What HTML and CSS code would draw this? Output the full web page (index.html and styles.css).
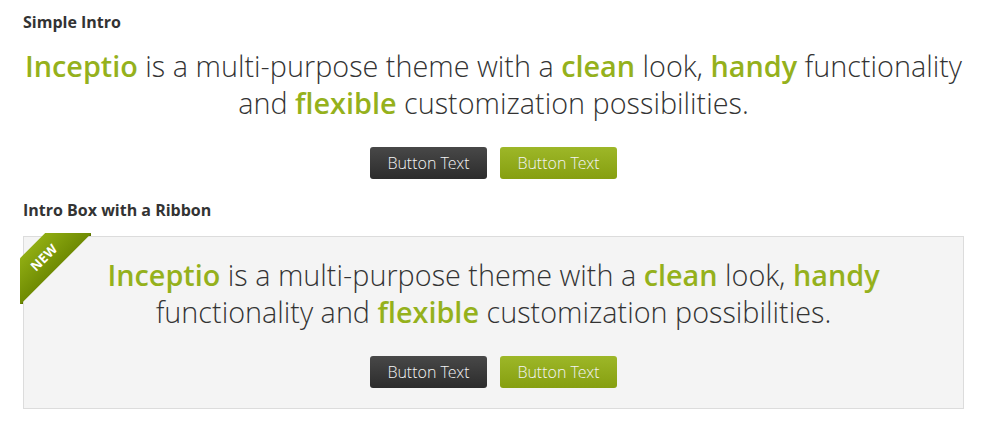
FILE: index.html
```html
<!DOCTYPE html>
<html>
<head>
<meta charset="utf-8">
<link rel="stylesheet" href="styles.css">
</head>
<body>
<div class="page">
  <h4 class="title">Simple Intro</h4>
  <div class="intro">
    <p class="intro-text"><strong>Inceptio</strong> is a multi-purpose theme with a <strong>clean</strong> look, <strong>handy</strong> functionality and <strong>flexible</strong> customization possibilities.</p>
    <div class="buttons">
      <a class="btn btn-dark">Button Text</a>
      <a class="btn btn-green">Button Text</a>
    </div>
  </div>

  <h4 class="title title-2">Intro Box with a Ribbon</h4>
  <div class="intro intro-box">
    <div class="ribbon-wrap"><div class="ribbon">NEW</div></div>
    <p class="intro-text"><strong>Inceptio</strong> is a multi-purpose theme with a <strong>clean</strong> look, <strong>handy</strong> functionality and <strong>flexible</strong> customization possibilities.</p>
    <div class="buttons">
      <a class="btn btn-dark">Button Text</a>
      <a class="btn btn-green">Button Text</a>
    </div>
  </div>
</div>
</body>
</html>
```

FILE: styles.css
```css
* { box-sizing: border-box; }
html, body { margin: 0; padding: 0; background: #fff; }
body {
  font-family: "Open Sans", "Liberation Sans", sans-serif;
  color: #333;
}
.page {
  padding: 12px 30px 0 23px;
}
.title {
  margin: 0;
  font-size: 16px;
  line-height: 20px;
  font-weight: 700;
  color: #333;
}
.title-2 { margin-top: 21px; }
.intro {
  text-align: center;
  margin-top: 15px;
}
.intro-text {
  margin: 0;
  font-family: "Open Sans Light", "Open Sans", sans-serif;
  font-size: 28.8px;
  line-height: 37px;
  font-weight: 300;
  color: #333;
}
.intro-text strong {
  font-family: "Open Sans", sans-serif;
  font-weight: 600;
  color: #95b11c;
}
.buttons {
  display: flex;
  justify-content: center;
  gap: 13px;
  margin-top: 26px;
}
.btn {
  display: block;
  width: 117px;
  height: 32px;
  line-height: 32px;
  font-family: "Open Sans Light", "Open Sans", sans-serif;
  font-size: 16px;
  font-weight: 300;
  color: #f4f4f4;
  border-radius: 3px;
  text-align: center;
}
.btn-dark {
  background: linear-gradient(#484848, #2c2c2c);
}
.btn-green {
  background: linear-gradient(#9db728, #869f10);
}
.intro-box {
  position: relative;
  margin-top: 16px;
  background: #f4f4f4;
  border: 1px solid #dcdcdc;
  padding: 19px 60px 19px;
  height: 173px;
}
.ribbon-wrap {
  position: absolute;
  top: -4px;
  left: -4px;
  width: 71px;
  height: 71px;
  overflow: hidden;
}
.ribbon-wrap::before,
.ribbon-wrap::after {
  content: "";
  position: absolute;
  width: 3px;
  height: 3px;
  background: #5a7000;
}
.ribbon-wrap::before { left: 0; bottom: 0; }
.ribbon-wrap::after { right: 0; top: 0; }
.ribbon {
  position: absolute;
  z-index: 1;
  top: 8px;
  left: -26px;
  width: 100px;
  height: 33px;
  line-height: 33px;
  transform: rotate(-45deg);
  background: linear-gradient(#90ad12, #6f8b03);
  color: #fff;
  font-size: 13px;
  font-weight: 700;
  text-align: center;
  letter-spacing: 0.5px;
}
```
